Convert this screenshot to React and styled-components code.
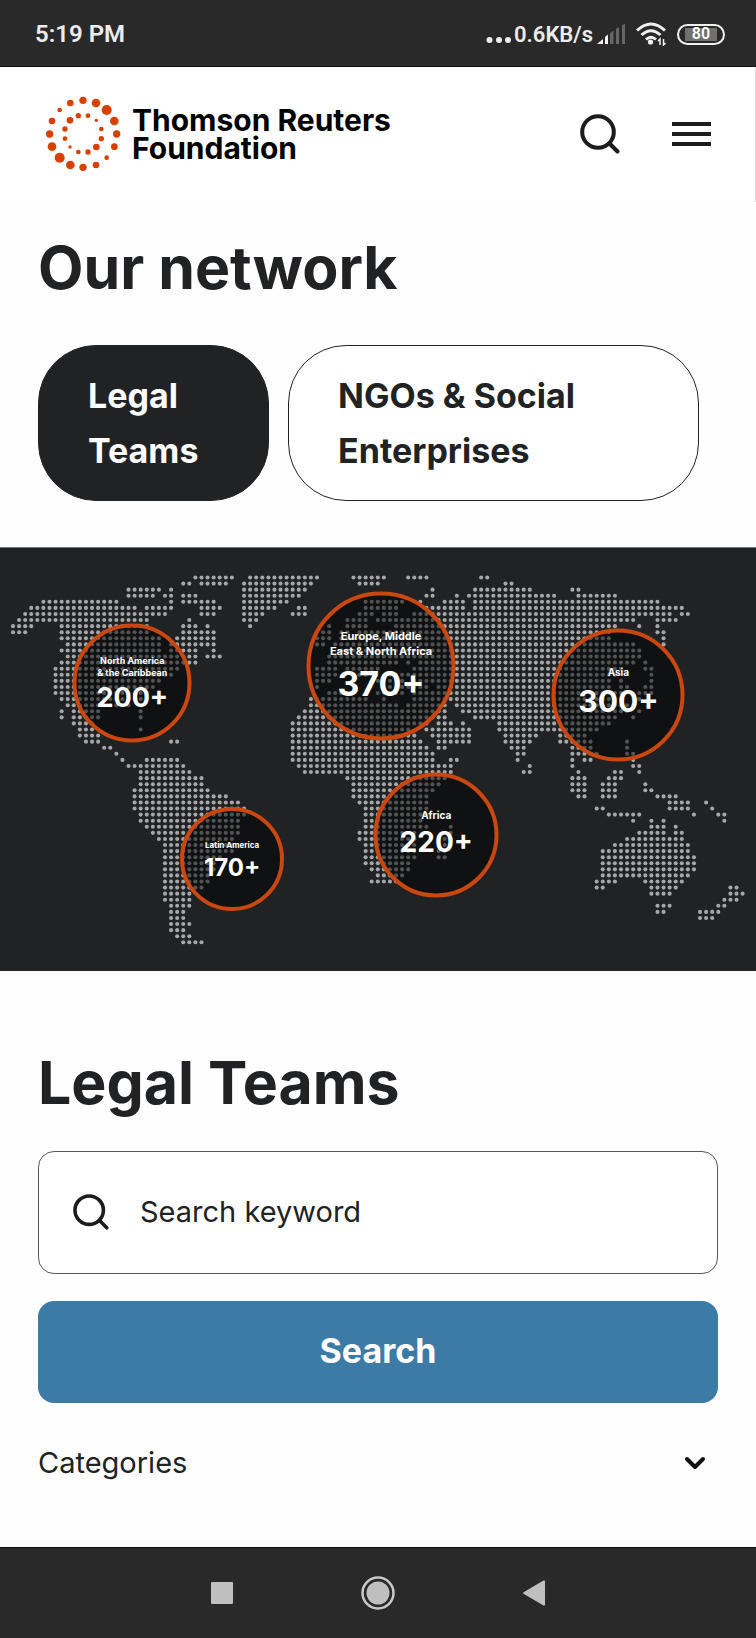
import React from "react";
import styled, { createGlobalStyle, css } from "styled-components";

const ink = "#202224";
const orange = "#d64000";

const GlobalStyle = createGlobalStyle`
  *, *::before, *::after { box-sizing: border-box; }
  body {
    margin: 0;
    background: #fefefe;
    color: ${ink};
    font-family: Inter, "Liberation Sans", sans-serif;
  }
  button, input { font: inherit; color: inherit; }
  svg { display: block; }
`;

const Screen = styled.div`
  display: flex;
  flex-direction: column;
  min-height: 100vh;
`;

const StatusBar = styled.div`
  display: flex;
  align-items: center;
  justify-content: space-between;
  height: 67px;
  padding: 2px 31px 0 35px;
  background: #292929;
  border-bottom: 1px solid #111;
  color: #ececec;
  font-family: Roboto, sans-serif;
  font-size: 24px;
  font-weight: 600;
`;

const StatusGroup = styled.div`
  display: flex;
  align-items: center;
`;

const NetworkSpeed = styled.span`
  margin: 0 4px 0 2px;
  font-size: 22px;
  font-weight: 600;
`;

const WifiIcon = styled.svg`
  margin: 0 11px;
`;

const Battery = styled.span`
  display: flex;
  align-items: center;
  justify-content: center;
  width: 48px;
  height: 21px;
  border: 2px solid #f0f0f0;
  border-radius: 11px;
  background: linear-gradient(#707070, #707070) center / 32px 13px no-repeat;
  font-size: 16px;
  line-height: 16px;
  color: #fff;
`;

const Header = styled.header`
  display: flex;
  align-items: center;
  justify-content: space-between;
  height: 135px;
  padding: 0 44px 2px 45px;
  background: #fff;
  border-right: 1px solid #dcdcdc;
`;

const Brand = styled.a`
  display: flex;
  align-items: center;
  gap: 11px;
  color: #000;
  font-size: 30px;
  font-weight: 700;
  line-height: 28px;
  text-decoration: none;
`;

const HeaderActions = styled.div`
  display: flex;
  align-items: center;
  gap: 52px;
`;

const IconButton = styled.button`
  display: flex;
  padding: 0;
  border: 0;
  background: none;
  cursor: pointer;
`;

const Network = styled.section`
  padding: 30px 38px 46px;
`;

const Title = styled.h1`
  margin: 0;
  font-size: 59px;
  font-weight: 700;
  line-height: 72px;
`;

const Tabs = styled.div`
  display: grid;
  grid-template-columns: minmax(0, 9fr) minmax(0, 16fr);
  gap: 19px;
  margin: 41px 19px 0 0;
`;

const Tab = styled.button`
  padding: 22px 49px;
  border: 1px solid ${ink};
  border-radius: 58px;
  background: ${(p) => (p.$active ? ink : "#fff")};
  color: ${(p) => (p.$active ? "#fff" : ink)};
  font-size: 34px;
  font-weight: 700;
  line-height: 55px;
  text-align: left;
  cursor: pointer;
`;

const MapPanel = styled.section`
  position: relative;
  background: ${ink};
  border-top: 1px solid #77797c;
`;

const DotMap = styled.svg`
  width: 100%;
  height: auto;
`;

const Bubble = styled.div`
  position: absolute;
  display: flex;
  flex-direction: column;
  align-items: center;
  justify-content: center;
  transform: translate(-50%, -50%);
  border: 4px solid #cb4711;
  border-radius: 50%;
  background: rgba(0, 0, 0, 0.5);
  color: #fff;
  text-align: center;
  white-space: nowrap;
  ${(p) => css`
    left: ${p.$x}%;
    top: ${p.$y}%;
    width: ${p.$size}px;
    height: ${p.$size}px;
    padding: ${p.$pad};
  `}
`;

const BubbleLabel = styled.span`
  font-size: ${(p) => p.$font}px;
  font-weight: 700;
  line-height: ${(p) => p.$line}px;
  white-space: pre-line;
`;

const BubbleCount = styled.strong`
  font-size: ${(p) => p.$font}px;
  font-weight: 700;
  line-height: ${(p) => p.$line}px;
`;

const Finder = styled.form`
  padding: 76px 38px 0;
`;

const SearchField = styled.label`
  display: flex;
  align-items: center;
  gap: 31px;
  height: 123px;
  margin-top: 32px;
  padding: 0 34px 2px;
  border: 1px solid #55575a;
  border-radius: 16px;
  background: #fff;
`;

const SearchInput = styled.input`
  flex: 1;
  min-width: 0;
  padding: 0;
  border: 0;
  outline: 0;
  background: none;
  font-size: 29px;
  line-height: 40px;
  &::placeholder { color: ${ink}; opacity: 1; }
`;

const SubmitButton = styled.button`
  width: 100%;
  height: 102px;
  margin-top: 27px;
  padding: 0 0 4px;
  border: 0;
  border-radius: 16px;
  background: #3d7ba7;
  color: #fff;
  font-size: 34px;
  font-weight: 700;
  cursor: pointer;
`;

const CategoriesToggle = styled.button`
  display: flex;
  align-items: center;
  justify-content: space-between;
  width: 100%;
  margin: 40px 0 64px;
  padding: 0 12px 0 0;
  border: 0;
  background: none;
  font-size: 29px;
  line-height: 40px;
  cursor: pointer;
`;

const SystemNav = styled.nav`
  display: grid;
  grid-template-columns: 36px 36px 36px;
  justify-content: center;
  align-items: center;
  justify-items: center;
  gap: 120px;
  height: 91px;
  margin-top: auto;
  background: #292929;
  border-top: 1px solid #111;
`;

const ringDots = [
  [250, 299, 11], [289, 307, 13], [321, 328, 15], [344, 361, 13],
  [351, 400, 11], [344, 438, 10], [321, 471, 7], [289, 493, 10],
  [250, 500, 11], [212, 493, 13], [180, 471, 15], [157, 438, 13],
  [150, 400, 11], [157, 361, 10], [180, 328, 7], [212, 307, 10],
  [236, 345, 8], [265, 345, 7], [290, 359, 5], [305, 385, 7],
  [305, 414, 8], [290, 439, 10], [265, 454, 8], [236, 454, 7],
  [211, 439, 5], [196, 414, 7], [196, 385, 8], [211, 359, 10],
];

/* Columns holding a dot, one string per map row: "from-to" or a single column. */
const mapRows = [
  "30-36 39-50 56-61 65-68 77-78",
  "28-29 31-35 38-49 57-60 81-82",
  "19-24 26 38-48 69 76-85 92-93",
  "19-23 25-26 28-30 38-47 68-69 73 75-89 93-99",
  "5-17 26 28-33 38-45 58-64 67 71-74 76-106",
  "3-20 22-26 31-34 38-43 47-48 58-63 68-74 76-110",
  "2-25 31-33 38-41 46-48 57-59 61-63 66-108 110-111",
  "1-22 29 38-40 55-58 60-102 106-109",
  "0-3 8-22 28-30 32 39 52 55-58 63-99 103 106",
  "0-2 8-22 28-33 51-52 54-55 57-98 106-107",
  "8-24 27-33 50-52 54-98 107",
  "9-24 26-33 50-51 53-102 107",
  "8-24 26-30 33 54-103",
  "9-30 32-34 52-103",
  "8-30 52-63 65 67-102 104",
  "7-27 50-53 55-60 66-100 104-105",
  "7-26 50-53 56-58 62-99 105",
  "7-24 50-52 56 60-64 66-98 100 105",
  "7-23 50 62-68 70-98 100-101 104-105",
  "7-22 52-55 60-64 66-100 103-105",
  "8-21 49-58 61 66-100 103",
  "9-19 21 49-63 65-71 73-102",
  "8 10-14 21 48-71 74-101 103",
  "8 10-14 21 47-71 76-99 102",
  "10-13 46-68 70-72 74 80-98",
  "11-13 21 46-65 68-75 80-96",
  "11-14 46-66 69-75 81-86 90-94",
  "12-14 26-27 46-67 70-75 81-85 90-95 101",
  "15-16 46-68 70-71 82-84 92-95 101",
  "17 46-69 83-84 92-96 101-102",
  "18 22-27 46-69 72-73 83 92 94-95 102",
  "19-28 47-72 85 92 102-103",
  "21-29 48-72 84-85 93 99-100 103",
  "21-31 55-71 92-94 98-100",
  "21-31 56-70 92-94 97-99 104",
  "20-32 56-69 92-94 97-99 104-105",
  "20-35 56-68 93-94 97-99 106-109",
  "20-37 57-68 108-111 114",
  "20-38 58-68 96-97 108-111 115",
  "21-38 58-68 98-103 112 116-117",
  "21-37 58-67 102 105 107 117",
  "22-37 58-68 72 105-107 109",
  "23-37 57-66 72 103-107 109-110",
  "24-36 57-66 71-72 101-110",
  "25-36 58-66 71 99-111",
  "25-36 58-66 70-71 97-111",
  "25-34 58-66 70-71 97-112",
  "25-33 58-65 97-112",
  "25-33 59-65 97-112",
  "25-32 60-64 97-111",
  "25-32 59-63 96-99 104-110",
  "25-31 96-97 105-109 118-119",
  "25-29 105-108 118-120",
  "25-29 117-119",
  "26-29 106-108 116-117",
  "26-28 106-107 113-116",
  "26-28 113-115",
  "26-29",
  "26-28",
  "27-29",
  "28-31",
];

const PITCH = 6.08;

const mapDots = mapRows.flatMap((row, r) =>
  row.split(" ").flatMap((span) => {
    const [from, to = from] = span.split("-").map(Number);
    return Array.from({ length: to - from + 1 }, (_, i) => [
      13 + (from + i) * PITCH,
      29.5 + r * PITCH,
    ]);
  })
);

const regions = [
  { label: "North America\n& the Caribbean", count: "200+", x: 17.5, y: 31.9, size: 119, font: 9, line: 12, countFont: 27, countLine: 38, pad: "6px 0 0" },
  { label: "Europe, Middle\nEast & North Africa", count: "370+", x: 50.4, y: 27.8, size: 149, font: 11, line: 15, countFont: 34, countLine: 50, pad: "6px 0 0" },
  { label: "Asia", count: "300+", x: 81.8, y: 34.8, size: 133, font: 10, line: 16, countFont: 30, countLine: 42, pad: "0 0 6px" },
  { label: "Latin America", count: "170+", x: 30.7, y: 73.5, size: 104, font: 8, line: 12, countFont: 24, countLine: 34, pad: "6px 0 0" },
  { label: "Africa", count: "220+", x: 57.7, y: 67.8, size: 125, font: 10, line: 16, countFont: 28, countLine: 38, pad: "0 0 2px" },
];

const SearchIcon = ({ size }) => (
  <svg width={size} height={size} viewBox="0 0 40 40" fill="none" stroke="#1b1c1e" strokeWidth="4" strokeLinecap="round" aria-hidden="true">
    <circle cx="18" cy="18" r="15.8" />
    <path d="M29.5 29.5 37.5 37.5" />
  </svg>
);

export default function App() {
  return (
    <Screen>
      <GlobalStyle />
      <StatusBar>
        <span>5:19 PM</span>
        <StatusGroup>
          <svg width="26" height="24" viewBox="0 0 26 24" fill="#ececec" aria-hidden="true">
            <circle cx="3.5" cy="18" r="3" />
            <circle cx="13" cy="18" r="3" />
            <circle cx="22" cy="18" r="3" />
          </svg>
          <NetworkSpeed>0.6KB/s</NetworkSpeed>
          <svg width="28" height="22" viewBox="0 0 28 22" aria-hidden="true">
            <path d="M0 21 6 16V21Z" fill="#f0f0f0" />
            <path d="M8 14 11 11.5V21H8Z" fill="#f0f0f0" />
            <path d="M13 10 16.5 7.500V21H13ZM19 6 22 4V21H19ZM25 2.500 28 .5V21H25Z" fill="#666" />
          </svg>
          <WifiIcon width="30" height="24" viewBox="0 0 30 24" fill="none" stroke="#f0f0f0" strokeWidth="3" aria-hidden="true">
            <path d="M1 8.500Q15-4.500 29 8.500" />
            <path d="M5.500 13Q15 4.500 24.500 13" />
            <path d="M10 17.500Q15 13 20 17.500" />
            <circle cx="14.500" cy="20" r="2.600" fill="#f0f0f0" stroke="none" />
            <path d="M24 23V17L22 19M27.500 17V23L29.500 21" strokeWidth="1.500" />
          </WifiIcon>
          <Battery>80</Battery>
        </StatusGroup>
      </StatusBar>

      <Header>
        <Brand href="#home">
          <svg width="76" height="76" viewBox="136 286 228 228" fill={orange} aria-hidden="true">
            {ringDots.map(([x, y, r]) => (
              <circle key={`${x}-${y}`} cx={x} cy={y} r={r} />
            ))}
          </svg>
          <span>
            Thomson Reuters
            <br />
            Foundation
          </span>
        </Brand>
        <HeaderActions>
          <IconButton type="button" aria-label="Search">
            <SearchIcon size={40} />
          </IconButton>
          <IconButton type="button" aria-label="Menu">
            <svg width="39" height="24" viewBox="0 0 39 24" fill="#1b1c1e" aria-hidden="true">
              <path d="M0 0H39V4H0ZM0 10H39V14H0ZM0 20H39V24H0Z" />
            </svg>
          </IconButton>
        </HeaderActions>
      </Header>

      <main>
        <Network>
          <Title>Our network</Title>
          <Tabs>
            <Tab type="button" aria-pressed="true" $active>Legal Teams</Tab>
            <Tab type="button" aria-pressed="false">NGOs &amp; Social Enterprises</Tab>
          </Tabs>
        </Network>

        <MapPanel aria-label="Members by region">
          <DotMap viewBox="0 0 756 423" fill="#a6a7a7" aria-hidden="true">
            {mapDots.map(([x, y]) => (
              <circle key={`${x}-${y}`} cx={x} cy={y} r="2.050" />
            ))}
          </DotMap>
          {regions.map((r) => (
            <Bubble key={r.label} $x={r.x} $y={r.y} $size={r.size} $pad={r.pad}>
              <BubbleLabel $font={r.font} $line={r.line}>{r.label}</BubbleLabel>
              <BubbleCount $font={r.countFont} $line={r.countLine}>{r.count}</BubbleCount>
            </Bubble>
          ))}
        </MapPanel>

        <Finder onSubmit={(e) => e.preventDefault()}>
          <Title as="h2">Legal Teams</Title>
          <SearchField>
            <SearchIcon size={36} />
            <SearchInput type="text" placeholder="Search keyword" aria-label="Search keyword" />
          </SearchField>
          <SubmitButton type="submit">Search</SubmitButton>
          <CategoriesToggle type="button" aria-expanded="false">
            <span>Categories</span>
            <svg width="22" height="16" viewBox="0 0 22 16" fill="none" stroke="#111" strokeWidth="4" strokeLinecap="round" strokeLinejoin="round" aria-hidden="true">
              <path d="M3 4 11 12 19 4" />
            </svg>
          </CategoriesToggle>
        </Finder>
      </main>

      <SystemNav aria-label="System">
        <IconButton type="button" aria-label="Recent apps">
          <svg width="22" height="22" viewBox="0 0 22 22" fill="#bfbfbf" aria-hidden="true">
            <rect width="22" height="22" rx="1" />
          </svg>
        </IconButton>
        <IconButton type="button" aria-label="Home">
          <svg width="34" height="34" viewBox="0 0 34 34" fill="#bfbfbf" aria-hidden="true">
            <circle cx="17" cy="17" r="15.500" fill="none" stroke="#c8c8c8" strokeWidth="2.500" />
            <circle cx="17" cy="17" r="11.500" />
          </svg>
        </IconButton>
        <IconButton type="button" aria-label="Back">
          <svg width="22" height="26" viewBox="0 0 22 26" fill="#bfbfbf" aria-hidden="true">
            <path d="M.5 12.200 20.500.5Q22 0 22 1.500V24.500Q22 26 20.500 25.500L.5 13.800Q-.3 13 .5 12.200Z" />
          </svg>
        </IconButton>
      </SystemNav>
    </Screen>
  );
}
